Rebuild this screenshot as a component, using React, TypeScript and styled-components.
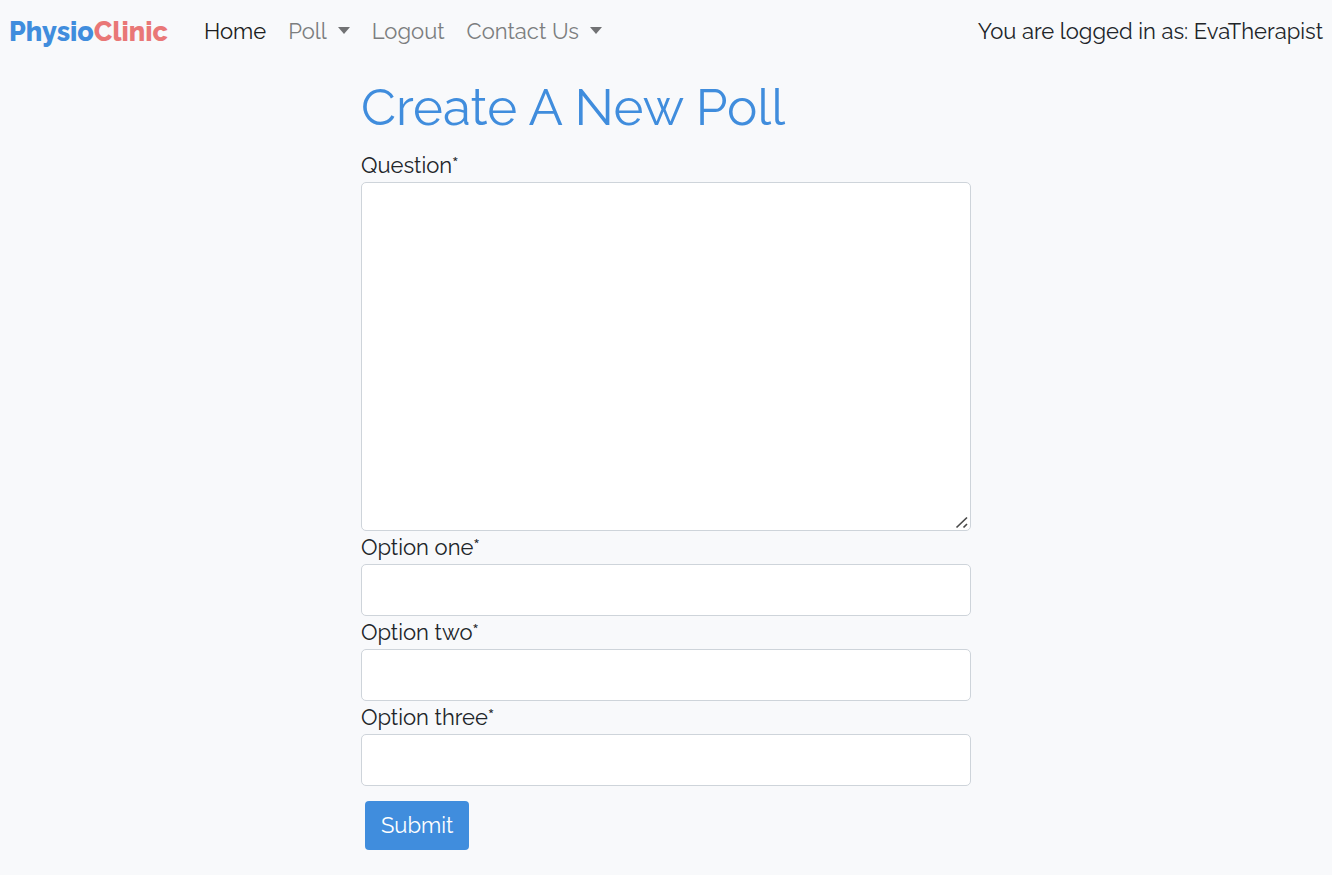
import React from "react";
import styled, { createGlobalStyle } from "styled-components";

const GlobalStyle = createGlobalStyle`
  *, *::before, *::after { box-sizing: border-box; }
  body {
    margin: 0;
    background: #f8f9fb;
    color: #212529;
    font-family: Raleway, Lato, "Open Sans", sans-serif;
    font-size: 22px;
    font-weight: 400;
    line-height: 33px;
  }
`;

const Navbar = styled.nav`
  display: flex;
  align-items: flex-start;
  justify-content: space-between;
  padding: 15px 9px;
`;

const NavStart = styled.div`
  display: flex;
  align-items: flex-start;
  gap: 36px;
`;

const Brand = styled.a`
  color: #408ddd;
  font-size: 27px;
  font-weight: 800;
  line-height: 34px;
  text-decoration: none;
`;

const BrandAccent = styled.span`
  color: #e97777;
`;

const NavList = styled.ul`
  display: flex;
  gap: 22px;
  margin: 0;
  padding: 0;
  list-style: none;
`;

const NavLink = styled.a<{ $active?: boolean }>`
  display: flex;
  align-items: center;
  color: ${(p) => (p.$active ? "#1b1d20" : "#7c7e7f")};
  text-decoration: none;
`;

const Caret = styled.span`
  margin: 0 0 2px 11px;
  border-top: 7px solid #717274;
  border-left: 6px solid transparent;
  border-right: 6px solid transparent;
`;

const Main = styled.main`
  width: 100%;
  max-width: 626px;
  margin: 0 auto;
  padding: 12px 8px 24px;
`;

const Title = styled.h1`
  margin: 0 0 11px;
  color: #408ddd;
  font-size: 51px;
  font-weight: 400;
  line-height: 62px;
`;

const Form = styled.form`
  display: flex;
  flex-direction: column;
`;

const Label = styled.label`
  align-self: flex-start;
`;

const grip = encodeURIComponent(
  `<svg xmlns="http://www.w3.org/2000/svg" width="15" height="15"><path d="M1.5 12.5L12 2.5M8.5 12.5L12 9" stroke="#4a4a4a" stroke-width="1.7" fill="none"/></svg>`
);

const TextArea = styled.textarea`
  display: block;
  width: 100%;
  height: 349px;
  padding: 8px 16px;
  border: 1px solid #ced4da;
  border-radius: 5px;
  background: #fff;
  font: inherit;
  resize: vertical;

  &::-webkit-resizer {
    background: url("data:image/svg+xml,${grip}") no-repeat;
  }
`;

const TextInput = styled.input`
  width: 100%;
  height: 52px;
  padding: 8px 16px;
  border: 1px solid #ced4da;
  border-radius: 5px;
  background: #fff;
  font: inherit;
`;

const SubmitButton = styled.button`
  align-self: flex-start;
  height: 49px;
  margin: 15px 4px 0;
  padding: 0 16px;
  border: 0;
  border-radius: 4px;
  background: #408ddd;
  color: #fff;
  font: inherit;
`;

const links = [
  { text: "Home", active: true },
  { text: "Poll", menu: true },
  { text: "Logout" },
  { text: "Contact Us", menu: true },
];

const options = ["one", "two", "three"];

export default function App() {
  return (
    <>
      <GlobalStyle />
      <Navbar>
        <NavStart>
          <Brand href="#">Physio<BrandAccent>Clinic</BrandAccent></Brand>
          <NavList>
            {links.map((l) => (
              <li key={l.text}>
                <NavLink href="#" $active={l.active}>{l.text}{l.menu && <Caret />}</NavLink>
              </li>
            ))}
          </NavList>
        </NavStart>
        <span>You are logged in as: EvaTherapist</span>
      </Navbar>
      <Main>
        <Title>Create A New Poll</Title>
        <Form onSubmit={(e) => e.preventDefault()}>
          <Label htmlFor="question">Question*</Label>
          <TextArea id="question" />
          {options.map((o) => (
            <React.Fragment key={o}>
              <Label htmlFor={`option-${o}`}>Option {o}*</Label>
              <TextInput id={`option-${o}`} type="text" />
            </React.Fragment>
          ))}
          <SubmitButton type="submit">Submit</SubmitButton>
        </Form>
      </Main>
    </>
  );
}
